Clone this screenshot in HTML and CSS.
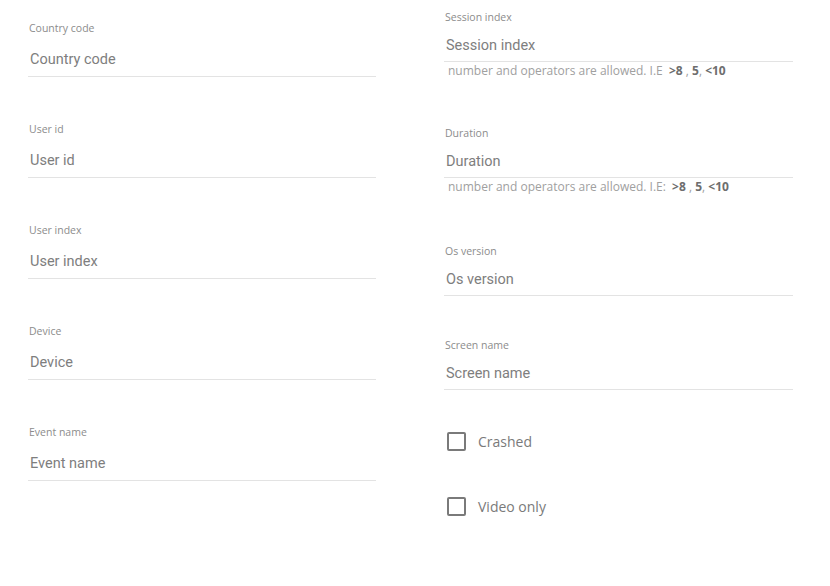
FILE: index.html
```html
<!DOCTYPE html>
<html lang="en">
<head>
<meta charset="utf-8">
<title>Filters</title>
<link rel="stylesheet" href="styles.css">
</head>
<body>
<form class="form">
  <div class="col col-left">
    <div class="field">
      <label class="field-label">Country code</label>
      <input class="field-input" type="text" placeholder="Country code">
    </div>
    <div class="field">
      <label class="field-label">User id</label>
      <input class="field-input" type="text" placeholder="User id">
    </div>
    <div class="field">
      <label class="field-label">User index</label>
      <input class="field-input" type="text" placeholder="User index">
    </div>
    <div class="field">
      <label class="field-label">Device</label>
      <input class="field-input" type="text" placeholder="Device">
    </div>
    <div class="field">
      <label class="field-label">Event name</label>
      <input class="field-input" type="text" placeholder="Event name">
    </div>
  </div>
  <div class="col col-right">
    <div class="field field-session">
      <label class="field-label">Session index</label>
      <input class="field-input" type="text" placeholder="Session index">
      <div class="field-hint">number and operators are allowed. I.E&nbsp;&nbsp;<b>&gt;8</b> , <b>5</b>, <b>&lt;10</b></div>
    </div>
    <div class="field field-duration">
      <label class="field-label">Duration</label>
      <input class="field-input" type="text" placeholder="Duration">
      <div class="field-hint">number and operators are allowed. I.E:&nbsp;&nbsp;<b>&gt;8</b> , <b>5</b>, <b>&lt;10</b></div>
    </div>
    <div class="field field-os">
      <label class="field-label">Os version</label>
      <input class="field-input" type="text" placeholder="Os version">
    </div>
    <div class="field field-screen">
      <label class="field-label">Screen name</label>
      <input class="field-input" type="text" placeholder="Screen name">
    </div>
    <label class="check check-crashed">
      <input class="check-box" type="checkbox">
      <span class="check-text">Crashed</span>
    </label>
    <label class="check check-video">
      <input class="check-box" type="checkbox">
      <span class="check-text">Video only</span>
    </label>
  </div>
</form>
</body>
</html>
```

FILE: styles.css
```css
html, body {
  margin: 0;
  padding: 0;
  background: #ffffff;
}

body {
  font-family: "Open Sans", "Liberation Sans", sans-serif;
  color: #757575;
}

.form {
  display: flex;
  gap: 68px;
  padding-left: 28px;
}

.col {
  display: flex;
  flex-direction: column;
}

.col-left {
  width: 348px;
  padding-top: 21px;
}

.col-right {
  width: 349px;
  padding-top: 10px;
}

.field {
  display: flex;
  flex-direction: column;
}

.col-left .field + .field {
  margin-top: 45px;
}

.field-label {
  font-family: "Open Sans", sans-serif;
  font-size: 10.5px;
  line-height: 14px;
  color: #8c8c8c;
  padding-left: 1px;
  margin-bottom: 7px;
}

.field-input {
  display: block;
  box-sizing: content-box;
  width: auto;
  height: 34px;
  margin: 0;
  padding: 0 2px;
  border: none;
  border-bottom: 1px solid #e3e3e3;
  background: transparent;
  font-family: Roboto, "Liberation Sans", sans-serif;
  font-size: 14.5px;
  font-weight: 400;
  color: #555;
  outline: none;
}

.field-input::placeholder {
  color: #7e7e7e;
  opacity: 1;
}

.col-right .field-label {
  margin-bottom: 5px;
}

.col-right .field-input {
  height: 32px;
}

.field-hint {
  margin-top: 1px;
  padding-left: 4px;
  font-family: "Open Sans", sans-serif;
  font-size: 12px;
  line-height: 16px;
  color: #a0a0a0;
  white-space: nowrap;
}

.field-hint b {
  font-weight: 700;
  color: #6e6e6e;
}

.field-duration {
  margin-top: 47px;
}

.field-os {
  margin-top: 49px;
}

.field-screen {
  margin-top: 42px;
}

.check {
  display: flex;
  align-items: center;
  gap: 12px;
  height: 20px;
  padding-left: 3px;
  cursor: pointer;
}

.check-crashed {
  margin-top: 41px;
}

.check-video {
  margin-top: 45px;
}

.check-box {
  appearance: none;
  -webkit-appearance: none;
  box-sizing: border-box;
  width: 19px;
  height: 19px;
  margin: 0;
  border: 2px solid #7a7a7a;
  border-radius: 2px;
  background: #fff;
}

.check-text {
  font-family: "Open Sans", sans-serif;
  font-size: 14px;
  color: #7a7a7a;
}
```
